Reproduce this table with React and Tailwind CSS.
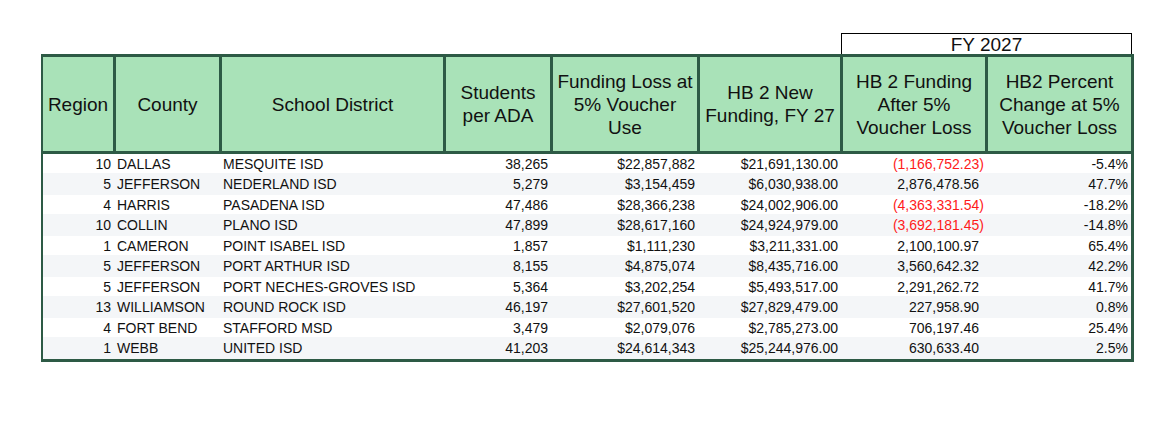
const rows = [
  { region: '10', county: 'DALLAS', district: 'MESQUITE ISD', students: '38,265', loss: '$22,857,882', hb2: '$21,691,130.00', after: '1,166,752.23', neg: true, pct: '-5.4%' },
  { region: '5', county: 'JEFFERSON', district: 'NEDERLAND ISD', students: '5,279', loss: '$3,154,459', hb2: '$6,030,938.00', after: '2,876,478.56', pct: '47.7%' },
  { region: '4', county: 'HARRIS', district: 'PASADENA ISD', students: '47,486', loss: '$28,366,238', hb2: '$24,002,906.00', after: '4,363,331.54', neg: true, pct: '-18.2%' },
  { region: '10', county: 'COLLIN', district: 'PLANO ISD', students: '47,899', loss: '$28,617,160', hb2: '$24,924,979.00', after: '3,692,181.45', neg: true, pct: '-14.8%' },
  { region: '1', county: 'CAMERON', district: 'POINT ISABEL ISD', students: '1,857', loss: '$1,111,230', hb2: '$3,211,331.00', after: '2,100,100.97', pct: '65.4%' },
  { region: '5', county: 'JEFFERSON', district: 'PORT ARTHUR ISD', students: '8,155', loss: '$4,875,074', hb2: '$8,435,716.00', after: '3,560,642.32', pct: '42.2%' },
  { region: '5', county: 'JEFFERSON', district: 'PORT NECHES-GROVES ISD', students: '5,364', loss: '$3,202,254', hb2: '$5,493,517.00', after: '2,291,262.72', pct: '41.7%' },
  { region: '13', county: 'WILLIAMSON', district: 'ROUND ROCK ISD', students: '46,197', loss: '$27,601,520', hb2: '$27,829,479.00', after: '227,958.90', pct: '0.8%' },
  { region: '4', county: 'FORT BEND', district: 'STAFFORD MSD', students: '3,479', loss: '$2,079,076', hb2: '$2,785,273.00', after: '706,197.46', pct: '25.4%' },
  { region: '1', county: 'WEBB', district: 'UNITED ISD', students: '41,203', loss: '$24,614,343', hb2: '$25,244,976.00', after: '630,633.40', pct: '2.5%' },
]

const headers = [
  ['Region'],
  ['County'],
  ['School District'],
  ['Students', 'per ADA'],
  ['Funding Loss at', '5% Voucher', 'Use'],
  ['HB 2 New', 'Funding, FY 27'],
  ['HB 2 Funding', 'After 5%', 'Voucher Loss'],
  ['HB2 Percent', 'Change at 5%', 'Voucher Loss'],
]

const cols = 'grid grid-cols-[70px_103px_221px_104px_144px_140px_142px_143px] gap-x-[3px]'

export default function App() {
  return (
    <div className="w-[1174px] h-[421px] bg-white text-[#111] font-['Liberation_Sans',Arial,sans-serif]">
      <div className="pt-[33px] pl-[41px]">
        {/* FY label box sits over the last two columns */}
        <div className="flex">
          <div className="w-[800px]" />
          <div className="w-[291px] h-[21px] border border-black border-b-0 flex items-center justify-center text-[19px] leading-none">
            FY 2027
          </div>
        </div>

        <div className="w-[1093px] border-[#2d5a45] border-t-[3px] border-l-[2px] border-r-[3px] border-b-[3px]">
          <div className={`${cols} bg-[#2d5a45] border-b-[3px] border-[#2d5a45]`}>
            {headers.map((lines, i) => (
              <div key={i} className="h-[94px] bg-[#a9e2b8] flex flex-col items-center justify-center text-[19px] leading-[23px] text-center">
                {lines.map((l) => (
                  <span key={l} className="whitespace-nowrap">{l}</span>
                ))}
              </div>
            ))}
          </div>

          {rows.map((r, i) => (
            <div
              key={r.district}
              className={`${cols} items-center text-[14px] leading-none ${i % 2 ? 'bg-[#f4f6f8] h-[22px]' : 'bg-white h-[19px]'}`}
            >
              <div className="text-right pr-[2px]">{r.region}</div>
              <div className="pl-[1px] whitespace-nowrap">{r.county}</div>
              <div className="pl-[1px] whitespace-nowrap">{r.district}</div>
              <div className="text-right pr-[2px]">{r.students}</div>
              <div className="text-right pr-[2px]">{r.loss}</div>
              <div className="text-right pr-[2px]">{r.hb2}</div>
              {r.neg ? (
                <div className="text-right pr-[1px] text-[#ff1a1a]">({r.after})</div>
              ) : (
                <div className="text-right pr-[6px]">{r.after}</div>
              )}
              <div className="text-right pr-[3px]">{r.pct}</div>
            </div>
          ))}
        </div>
      </div>
    </div>
  )
}
